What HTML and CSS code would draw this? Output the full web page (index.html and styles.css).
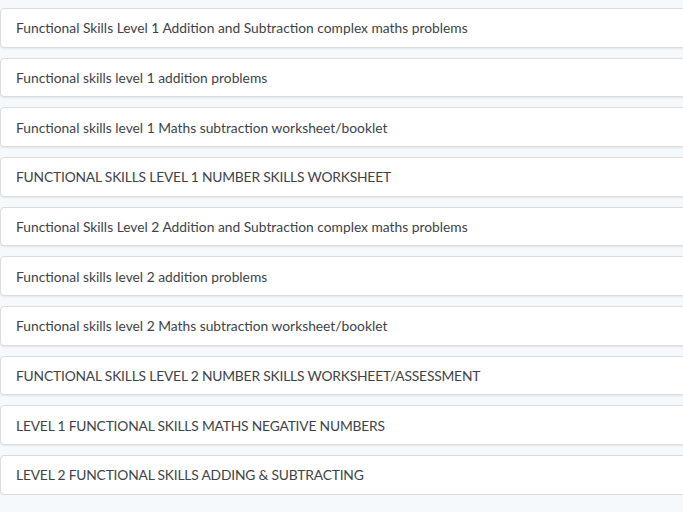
FILE: index.html
```html
<!DOCTYPE html>
<html lang="en">
<head>
    <meta charset="UTF-8">
    <meta name="viewport" content="width=device-width, initial-scale=1.0">
    <title>Functional Skills Resources</title>
    <link rel="stylesheet" href="styles.css">
</head>
<body>
    <ul class="resource-list">
        <li class="resource">Functional Skills Level 1 Addition and Subtraction complex maths problems</li>
        <li class="resource">Functional skills level 1 addition problems</li>
        <li class="resource">Functional skills level 1 Maths subtraction worksheet/booklet</li>
        <li class="resource caps">FUNCTIONAL SKILLS LEVEL 1 NUMBER SKILLS WORKSHEET</li>
        <li class="resource">Functional Skills Level 2 Addition and Subtraction complex maths problems</li>
        <li class="resource">Functional skills level 2 addition problems</li>
        <li class="resource">Functional skills level 2 Maths subtraction worksheet/booklet</li>
        <li class="resource caps">FUNCTIONAL SKILLS LEVEL 2 NUMBER SKILLS WORKSHEET/ASSESSMENT</li>
        <li class="resource caps">LEVEL 1 FUNCTIONAL SKILLS MATHS NEGATIVE NUMBERS</li>
        <li class="resource caps">LEVEL 2 FUNCTIONAL SKILLS ADDING &amp; SUBTRACTING</li>
    </ul>
</body>
</html>
```

FILE: styles.css
```css
body {
    font-family: Lato, "Liberation Sans", sans-serif;
    margin: 0;
    padding: 8px 0 0 0;
    background-color: #f5f9fc;
    overflow: hidden;
}
.resource-list {
    list-style: none;
    margin: 0;
    padding: 0;
    width: calc(100% + 10px);
    display: flex;
    flex-direction: column;
    gap: 10px;
}
.resource {
    box-sizing: border-box;
    height: 39.67px;
    display: flex;
    align-items: center;
    padding: 0 15px;
    font-size: 13.8px;
    color: #3d4349;
    background: #fff;
    border: 1px solid #d9dde0;
    border-radius: 4px;
    box-shadow: 0 1px 2px rgba(0, 0, 0, 0.08);
}
.caps {
    letter-spacing: -0.18px;
}
```
